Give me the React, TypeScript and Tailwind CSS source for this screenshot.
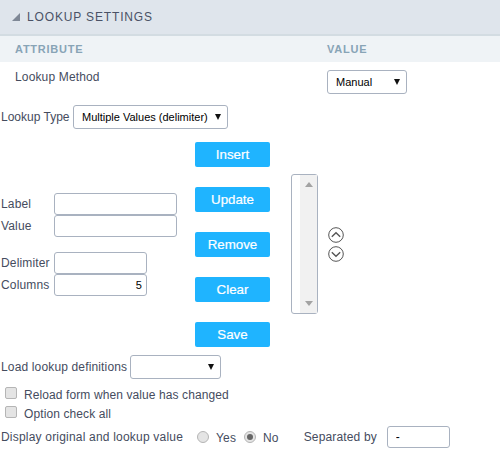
const font = "font-['Liberation_Sans',Arial,sans-serif]"

function Select({ value, options, className }: { value: string; options: string[]; className: string }) {
  return (
    <div className={`relative h-[24px] ${className}`}>
      <select
        defaultValue={value}
        className="h-full w-full appearance-none rounded-[3px] border border-[#a9b2c0] bg-white pl-[8px] text-[11px] tracking-normal text-black outline-none"
      >
        {options.map((o) => (
          <option key={o}>{o}</option>
        ))}
      </select>
      <svg className="pointer-events-none absolute right-[7px] top-[9px]" width="6" height="6" viewBox="0 0 6 6">
        <path d="M0 0h6L3 6z" fill="#111" />
      </svg>
    </div>
  )
}

function Field({ label, width, value }: { label: string; width: string; value?: string }) {
  return (
    <div className="flex h-[22px] items-center">
      <span className="w-[54px] shrink-0 pl-[1px]">{label}</span>
      <input
        readOnly
        value={value ?? ''}
        className={`h-[22px] ${width} rounded-[3px] border border-[#a9b2c0] bg-white pl-[6px] pr-[4px] text-right text-[11px] text-black outline-none`}
      />
    </div>
  )
}

function Button({ label }: { label: string }) {
  return (
    <button className="h-[25px] w-[75px] rounded-[2px] bg-[#1fb4ff] text-[13.3px] font-normal tracking-normal text-white [-webkit-text-stroke:0.2px_white]">
      {label}
    </button>
  )
}

function CheckRow({ label }: { label: string }) {
  return (
    <div className="flex h-[19px] items-center pl-[5px]">
      <span className="h-[12px] w-[12px] rounded-[2px] border border-[#b5b5b5] bg-[#e4e4e4]" />
      <span className="ml-[7px] mt-[5px] tracking-[0.1px]">{label}</span>
    </div>
  )
}

function Radio({ label, checked }: { label: string; checked?: boolean }) {
  return (
    <div className="flex items-center">
      <span className="flex h-[12px] w-[12px] items-center justify-center rounded-full border border-[#b5b5b5] bg-[#e4e4e4]">
        {checked && <span className="h-[6px] w-[6px] rounded-full bg-[#666]" />}
      </span>
      <span className="ml-[7px] mt-[2px]">{label}</span>
    </div>
  )
}

function ArrowCircle({ up }: { up?: boolean }) {
  return (
    <svg width="16" height="16" viewBox="0 0 16 16" fill="none" stroke="#555" strokeWidth="1">
      <circle cx="8" cy="8" r="7.3" />
      <path d={up ? 'M3.8 9.8 8 5.8l4.2 4' : 'M3.8 6.2 8 10.2l4.2-4'} strokeWidth="1.4" />
    </svg>
  )
}

export default function App() {
  return (
    <div className={`${font} h-[452px] w-[500px] overflow-hidden bg-white text-[12px] tracking-[0.15px] text-[#454c5e]`}>
      <div className="flex h-[36px] items-center border-b-2 border-[#d3dce2] bg-[#dfe5ec] pl-[12px]">
        <svg width="8" height="8" viewBox="0 0 8 8">
          <path d="M8 0v8H0z" fill="#7f8896" />
        </svg>
        <span className="ml-[7px] text-[12px] tracking-[0.85px] text-[#4a5266]">LOOKUP SETTINGS</span>
      </div>

      <div className="flex h-[26px] items-center bg-[#eff3f6] pl-[15px] text-[11px] font-bold tracking-[0.75px] text-[#88a4b6]">
        <span className="w-[312px]">ATTRIBUTE</span>
        <span>VALUE</span>
      </div>

      <div className="flex h-[43px] items-start pl-[15px]">
        <span className="mt-[6px] w-[312px]">Lookup Method</span>
        <Select value="Manual" options={['Manual']} className="mt-[8px] w-[80px]" />
      </div>

      <div className="flex h-[24px] items-center">
        <span className="w-[73px] pl-[1px] tracking-normal">Lookup Type</span>
        <Select value="Multiple Values (delimiter)" options={['Multiple Values (delimiter)']} className="w-[155px]" />
      </div>

      <div className="mt-[13px] flex h-[205px]">
        <div className="w-[195px] pt-[51px]">
          <Field label="Label" width="w-[123px]" />
          <Field label="Value" width="w-[123px]" />
          <div className="mt-[15px]">
            <Field label="Delimiter" width="w-[93px]" />
            <Field label="Columns" width="w-[93px]" value="5" />
          </div>
        </div>

        <div className="flex w-[75px] flex-col gap-[20px]">
          <Button label="Insert" />
          <Button label="Update" />
          <Button label="Remove" />
          <Button label="Clear" />
          <Button label="Save" />
        </div>

        <div className="ml-[21px] mt-[32px] flex h-[140px] w-[27px] justify-end rounded-[3px] border border-[#a9b2c0] bg-white">
          <div className="flex w-[17px] flex-col items-center justify-between bg-[#f1f1f1] py-[7px]">
            <svg width="8" height="5" viewBox="0 0 8 5">
              <path d="M0 5h8L4 0z" fill="#a3a3a3" />
            </svg>
            <svg width="8" height="5" viewBox="0 0 8 5">
              <path d="M0 0h8L4 5z" fill="#a3a3a3" />
            </svg>
          </div>
        </div>

        <div className="ml-[10px] mt-[85px] flex flex-col gap-[3px]">
          <ArrowCircle up />
          <ArrowCircle />
        </div>
      </div>

      <div className="mt-[8px] flex h-[24px] items-center">
        <span className="w-[130px] pl-[1px]">Load lookup definitions</span>
        <Select value="" options={['']} className="w-[91px]" />
      </div>

      <div className="mt-[4px]">
        <CheckRow label="Reload form when value has changed" />
        <CheckRow label="Option check all" />
      </div>

      <div className="mt-[4px] flex h-[24px] items-center">
        <span className="w-[197px] pl-[1px] tracking-[0.2px]">Display original and lookup value</span>
        <Radio label="Yes" />
        <div className="ml-[8px]">
          <Radio label="No" checked />
        </div>
        <span className="ml-[25px]">Separated by</span>
        <input
          readOnly
          value="-"
          className="ml-[10px] h-[22px] w-[63px] rounded-[3px] border border-[#a9b2c0] bg-white px-[8px] text-[12px] text-black outline-none"
        />
      </div>
    </div>
  )
}
